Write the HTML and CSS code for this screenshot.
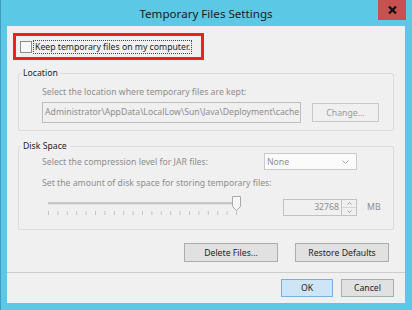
FILE: index.html
```html
<!DOCTYPE html>
<html lang="en">
<head>
  <meta charset="UTF-8">
  <meta name="viewport" content="width=device-width, initial-scale=1.0">
  <title>Temporary Files Settings</title>
  <link rel="stylesheet" href="styles.css">
</head>
<body>
  <div class="window">
    <div class="titlebar">
      <span class="title">Temporary Files Settings</span>
      <button class="close" type="button">
        <svg width="9" height="8" viewBox="0 0 9 8"><path d="M1 0.5 L8 7.5 M8 0.5 L1 7.5" stroke="#111" stroke-width="2.2"/></svg>
      </button>
    </div>

    <div class="client">
      <div class="keep">
        <span class="checkbox"></span>
        <span class="focus">Keep temporary files on my computer.</span>
      </div>

      <div class="group location">
        <div class="group-title">Location</div>
        <div class="hint">Select the location where temporary files are kept:</div>
        <div class="path-row">
          <div class="path">Administrator\AppData\LocalLow\Sun\Java\Deployment\cache</div>
          <button class="btn btn-off change" type="button">Change...</button>
        </div>
      </div>

      <div class="group disk">
        <div class="group-title">Disk Space</div>
        <div class="row">
          <span class="row-label">Select the compression level for JAR files:</span>
          <div class="select">
            <span>None</span>
            <svg width="7" height="4" viewBox="0 0 7 4"><path d="M0.5 0.5 L3.5 3.5 L6.5 0.5" fill="none" stroke="#a6a6a6"/></svg>
          </div>
        </div>
        <div class="hint hint-gap">Set the amount of disk space for storing temporary files:</div>
        <div class="row slider-row">
          <svg class="slider" width="196" height="20" viewBox="0 0 196 20">
            <rect x="0" y="6" width="188" height="2" fill="#c6c6c6"/>
            <rect x="0" y="8" width="188" height="1" fill="#e2e2e2"/>
            <g stroke="#c4c4c4">
              <path d="M0.5 15v4M9.9 15v4M19.3 15v4M28.7 15v4M38.1 15v4M47.5 15v4M56.9 15v4M66.3 15v4M75.7 15v4M85.1 15v4M94.5 15v4M103.9 15v4M113.3 15v4M122.7 15v4M132.1 15v4M141.5 15v4M150.9 15v4M160.3 15v4M169.7 15v4M179.1 15v4M188.5 15v4"/>
            </g>
            <path d="M184.5 0.5 H192.5 V10.5 L188.5 14.5 L184.5 10.5 Z" fill="#f6f6f6" stroke="#a9a9a9"/>
          </svg>
          <div class="spin">
            <span class="spin-value">32768</span>
            <span class="spin-arrows">
              <span class="arrow"><svg width="5" height="3" viewBox="0 0 5 3"><path d="M0.5 2.5 L2.5 0.5 L4.5 2.5" fill="none" stroke="#a0a0a0"/></svg></span>
              <span class="arrow"><svg width="5" height="3" viewBox="0 0 5 3"><path d="M0.5 0.5 L2.5 2.5 L4.5 0.5" fill="none" stroke="#a0a0a0"/></svg></span>
            </span>
          </div>
          <span class="unit">MB</span>
        </div>
      </div>

      <div class="actions">
        <button class="btn wide" type="button">Delete Files...</button>
        <button class="btn wide" type="button">Restore Defaults</button>
      </div>

      <div class="footer">
        <button class="btn ok" type="button">OK</button>
        <button class="btn cancel" type="button">Cancel</button>
      </div>
    </div>
  </div>
</body>
</html>
```

FILE: styles.css
```css
* {
  box-sizing: border-box;
}

body {
  margin: 0;
  font-family: "Noto Sans", "Liberation Sans", sans-serif;
  font-size: 8.7px;
  color: #1e1e1e;
  background-color: #5bc8e6;
}

.window {
  width: 412px;
  height: 310px;
  display: flex;
  flex-direction: column;
  padding: 0 7px 7px 6px;
  background-color: #5bc8e6;
  border-left: 1px solid #3d9dc2;
}

.titlebar {
  height: 26px;
  display: grid;
  grid-template-columns: 1fr auto 1fr;
  align-items: center;
}

.title {
  grid-column: 2;
  font-size: 11.6px;
  color: #1b1b1b;
}

.close {
  grid-column: 3;
  justify-self: end;
  align-self: start;
  width: 28px;
  height: 20px;
  margin-right: -1px;
  padding: 0;
  border: none;
  background-color: #c75050;
  display: flex;
  align-items: center;
  justify-content: center;
}

.client {
  flex: 1;
  display: flex;
  flex-direction: column;
  background-color: #f0f0f0;
}

/* highlighted checkbox */
.keep {
  width: 191px;
  height: 27px;
  margin: 7px 0 0 6px;
  padding-left: 4px;
  border: 3px solid #e8231d;
  display: flex;
  align-items: center;
}

.checkbox {
  width: 12px;
  height: 12px;
  border: 1px solid #8c8c8c;
  background-color: #f7f7f7;
}

.focus {
  margin-left: 1px;
  padding: 0 1px;
  border: 1px dotted #444;
  line-height: 12px;
}

/* group boxes */
.group {
  margin: 0 11px;
  padding-left: 23px;
  border: 1px solid #dcdcdc;
  border-radius: 2px;
}

.location {
  margin-top: 13px;
  padding-bottom: 7px;
}

.disk {
  margin-top: 15px;
  padding-bottom: 13px;
}

.group-title {
  width: fit-content;
  margin: -7px 0 0 -21px;
  padding: 0 3px 0 2px;
  line-height: 13px;
  background-color: #f0f0f0;
}

.hint {
  margin-top: 5px;
  line-height: 14px;
  color: #8e8e8e;
}

.hint-gap {
  margin-top: 6px;
}

.path-row {
  display: flex;
  align-items: center;
  margin-top: 3px;
}

.path {
  width: 259px;
  height: 21px;
  padding-left: 2px;
  line-height: 19px;
  white-space: nowrap;
  overflow: hidden;
  color: #8e8e8e;
  border: 1px solid #bdbdbd;
  background-color: #f0f0f0;
}

.row {
  display: flex;
  align-items: center;
}

.row-label {
  width: 222px;
  color: #8e8e8e;
}

.select {
  width: 93px;
  height: 17px;
  padding: 0 7px 0 2px;
  display: flex;
  align-items: center;
  justify-content: space-between;
  color: #8e8e8e;
  border: 1px solid #cacaca;
  background-color: #fbfbfb;
}

.slider-row {
  align-items: flex-start;
  margin-top: 6px;
}

.slider {
  display: block;
  margin-left: 6px;
}

.spin {
  display: flex;
  height: 17px;
  margin: 3px 0 0 39px;
}

.spin-value {
  width: 59px;
  padding-right: 2px;
  text-align: right;
  line-height: 15px;
  color: #8e8e8e;
  border: 1px solid #c2c2c2;
  background-color: #f0f0f0;
}

.spin-arrows {
  width: 15px;
  display: flex;
  flex-direction: column;
  border: 1px solid #c2c2c2;
  border-left: none;
}

.arrow {
  flex: 1;
  display: flex;
  align-items: center;
  justify-content: center;
}

.arrow + .arrow {
  border-top: 1px solid #d6d6d6;
}

.unit {
  margin: 3px 0 0 10px;
  line-height: 17px;
  color: #8e8e8e;
}

/* buttons */
.btn {
  font: inherit;
  color: #1e1e1e;
  height: 19px;
  padding: 0;
  border: 1px solid #adadad;
  background-color: #e1e1e1;
}

.btn-off {
  color: #9a9a9a;
  border-color: #c9c9c9;
  background-color: #f0f0f0;
}

.change {
  width: 67px;
  margin-left: 11px;
}

.actions {
  display: flex;
  justify-content: flex-end;
  gap: 17px;
  margin-top: 13px;
  padding-right: 16px;
}

.wide {
  width: 94px;
}

.footer {
  display: flex;
  justify-content: flex-end;
  gap: 8px;
  margin-top: 10px;
  padding: 6px 11px 0 0;
  border-top: 1px solid #cdcdcd;
}

.ok,
.cancel {
  height: 18px;
}

.ok {
  width: 52px;
  border-color: #7aaee0;
  background-color: #cde5f7;
}

.cancel {
  width: 53px;
}
```
